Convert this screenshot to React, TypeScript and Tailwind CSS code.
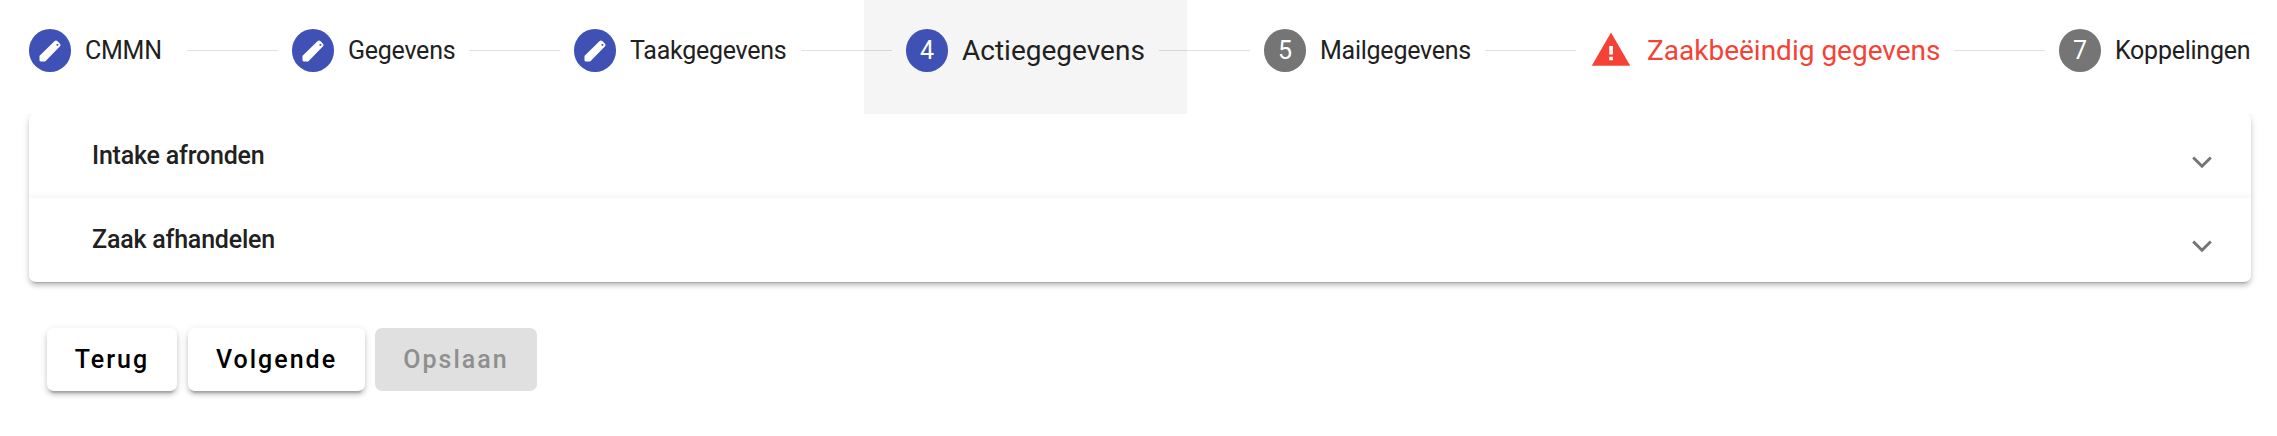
import React from "react";

type Kind = "edit" | "active" | "number" | "error";
interface Step {
  label: string;
  kind: Kind;
  num: number;
  width: string;
}

const steps: Step[] = [
  { label: "CMMN", kind: "edit", num: 1, width: "w-[88px]" },
  { label: "Gegevens", kind: "edit", num: 2, width: "w-[107px]" },
  { label: "Taakgegevens", kind: "edit", num: 3, width: "w-[157px]" },
  { label: "Actiegegevens", kind: "active", num: 4, width: "w-[183px]" },
  { label: "Mailgegevens", kind: "number", num: 5, width: "w-[151px]" },
  { label: "Zaakbeëindig gegevens", kind: "error", num: 6, width: "w-[294px]" },
  { label: "Koppelingen", kind: "number", num: 7, width: "w-[136px]" },
];

function Pencil() {
  return (
    <svg viewBox="0 0 24 24" className="size-7 fill-white">
      <path
        fillRule="evenodd"
        d="M3 16.6V20c0 .6.4 1 1 1h3.4c.3 0 .5-.1.7-.3L20.4 8.2c.8-.8.8-1.9 0-2.7L18.5 3.6c-.8-.8-1.9-.8-2.7 0L3.3 15.9c-.2.2-.3.4-.3.7zM17.6 5.9h1.5v1.5h-1.5z"
      />
    </svg>
  );
}

function Warning() {
  return (
    <svg viewBox="0 0 24 24" className="size-[42px] shrink-0">
      <path className="fill-[#f44336]" d="M1 21h22L12 2z" />
      <path className="fill-white" d="M11 9.7h2.1v4.9H11zM11 15.8h2.1v2H11z" />
    </svg>
  );
}

function StepHeader({ step }: { step: Step }) {
  const { kind, label, num, width } = step;
  const circle = kind === "number" ? "bg-[#757575]" : "bg-[#3f51b5]";
  const text =
    kind === "error"
      ? "pl-px text-[28px] text-[#f44336]"
      : kind === "active"
        ? "text-[28px] text-[#212121]"
        : "text-[25px] tracking-[-0.25px] text-[#212121]";
  return (
    <div className={`flex h-[114px] shrink-0 items-start gap-[14px] px-[42px] pt-[29px] ${kind === "active" ? "bg-black/[0.04]" : ""}`}>
      {kind === "error" ? (
        <Warning />
      ) : (
        <div className={`flex h-[43px] w-[42px] shrink-0 items-center justify-center rounded-full text-[25px] leading-none text-white ${circle}`}>
          {kind === "edit" ? <Pencil /> : num}
        </div>
      )}
      <div className={`whitespace-nowrap leading-[44px] ${width} ${text}`}>{label}</div>
    </div>
  );
}

function Panel({ title, position }: { title: string; position: string }) {
  return (
    <div
      className={`flex h-[84px] items-center justify-between bg-white pr-[39px] pl-[63px] shadow-[0_5px_2px_-4px_rgba(0,0,0,0.2),0_4px_4px_0_rgba(0,0,0,0.14),0_2px_9px_0_rgba(0,0,0,0.12)] ${position}`}
    >
      <span className="text-[25px] font-medium tracking-[-0.2px] text-[#212121]">{title}</span>
      <svg viewBox="0 0 20 13" className="mt-[12px] h-[13px] w-5 fill-none stroke-[#757575] stroke-[3]">
        <path d="M1.2 1.5 10 10.2 18.8 1.5" />
      </svg>
    </div>
  );
}

const raised =
  "bg-white text-black shadow-[0_5px_2px_-3px_rgba(0,0,0,0.2),0_4px_4px_0_rgba(0,0,0,0.14),0_2px_9px_0_rgba(0,0,0,0.12)]";

function Button({ label, look }: { label: string; look: string }) {
  return (
    <button className={`flex h-[63px] items-center justify-center rounded-[7px] pt-px text-[25px] font-medium tracking-[2px] ${look}`}>
      {label}
    </button>
  );
}

export default function App() {
  return (
    <div className="h-[436px] w-[2277px] overflow-hidden bg-white font-[Roboto,sans-serif]">
      <div className="-ml-[13px] flex h-[114px] w-[2306px]">
        {steps.map((s, i) => (
          <React.Fragment key={s.num}>
            {i > 0 && <div className="z-10 -mx-[28px] mt-[50px] h-px min-w-0 flex-1 bg-black/[0.12]" />}
            <StepHeader step={s} />
          </React.Fragment>
        ))}
      </div>
      <div className="overflow-hidden px-[29px] pr-[26px] pb-[46px]">
        <Panel title="Intake afronden" position="rounded-t-[7px]" />
        <Panel title="Zaak afhandelen" position="relative rounded-b-[7px]" />
      </div>
      <div className="flex pl-[47px]">
        <Button label="Terug" look={`w-[130px] mr-[11px] ${raised}`} />
        <Button label="Volgende" look={`w-[177px] mr-[10px] ${raised}`} />
        <Button label="Opslaan" look="w-[162px] bg-[#e0e0e0] text-[#8f8f8f]" />
      </div>
    </div>
  );
}
